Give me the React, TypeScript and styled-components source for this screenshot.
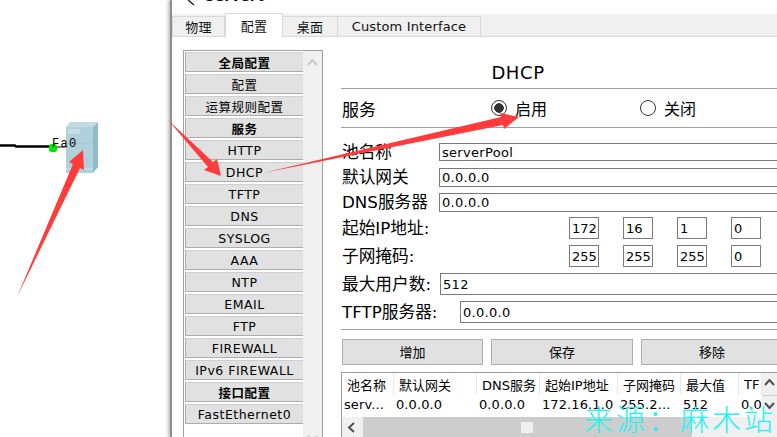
import React from 'react';
import styled, { createGlobalStyle } from 'styled-components';

const GlobalStyle = createGlobalStyle`
  html, body {
    margin: 0;
    padding: 0;
    background: #fff;
    overflow: hidden;
  }
`;

const UI_FONT = `"DejaVu Sans", "Noto Sans CJK SC", sans-serif`;

const Page = styled.div`
  position: relative;
  width: 777px;
  height: 437px;
  display: flex;
  overflow: hidden;
  background: #fff;
  font-family: ${UI_FONT};
  color: #000;
`;

const Canvas = styled.div`
  position: relative;
  flex: 0 0 170px;
`;

const Cable = styled.svg`
  position: absolute;
  left: 0;
  top: 138px;
`;

const PortLabel = styled.span`
  position: absolute;
  left: 52px;
  top: 137px;
  font: 12px/14px "Liberation Mono", monospace;
  letter-spacing: 1.3px;
`;

const ServerIcon = styled.svg`
  position: absolute;
  left: 65px;
  top: 121px;
`;

const Window = styled.div`
  flex: 0 0 auto;
  width: 640px;
  border-left: 2px solid #8e8e8e;
  box-shadow: -2px 0 3px rgba(0, 0, 0, 0.25);
  background: #fff;
  overflow: hidden;
`;

const TitleBar = styled.div`
  height: 14px;
  position: relative;
  overflow: hidden;
`;

const TitleText = styled.span`
  position: absolute;
  left: 33px;
  top: -11px;
  font-size: 13px;
  line-height: 15px;
  font-weight: 700;
  letter-spacing: 0.6px;
`;

const TitleGlyph = styled.svg`
  position: absolute;
  left: 15px;
  top: 0;
`;

const TabStrip = styled.div`
  height: 23px;
  display: flex;
  align-items: flex-end;
  background: #f0f0f0;
  border-bottom: 1px solid #d9d9d9;
  box-sizing: border-box;
`;

const Tab = styled.div<{ $width: number; $active?: boolean }>`
  width: ${p => p.$width}px;
  height: ${p => (p.$active ? 24 : 21)}px;
  margin-bottom: -1px;
  box-sizing: border-box;
  display: flex;
  align-items: center;
  justify-content: center;
  border: 1px solid #d9d9d9;
  border-left-width: ${p => (p.$active ? 1 : 0)}px;
  border-bottom: ${p => (p.$active ? 'none' : '1px solid #d9d9d9')};
  background: ${p => (p.$active ? '#fff' : '#f0f0f0')};
  font-size: 13px;
  letter-spacing: 0.15px;
  color: #111;
  &:first-child {
    border-left-width: 1px;
  }
`;

const Body = styled.div`
  display: flex;
  align-items: flex-start;
  padding: 13px 0 0 11px;
`;

const Sidebar = styled.div`
  flex: 0 0 140px;
  height: 396px;
  box-sizing: border-box;
  display: flex;
  border: 1px solid #a0a0a0;
`;

const NavList = styled.div`
  width: 118px;
  padding: 1px 0 0 1px;
  display: flex;
  flex-direction: column;
  gap: 2px;
`;

const NavItem = styled.div<{ $bold?: boolean }>`
  height: 20px;
  box-sizing: border-box;
  display: flex;
  align-items: center;
  justify-content: center;
  background: #e1e1e1;
  border: 1px solid #adadad;
  border-top-color: #cfcfcf;
  border-right: none;
  font-size: 12.5px;
  letter-spacing: 0.5px;
  font-weight: ${p => (p.$bold ? 700 : 400)};
  white-space: nowrap;
`;

const SideScroll = styled.div`
  flex: 1;
  background: #f0f0f0;
  display: flex;
  flex-direction: column;
  justify-content: space-between;
  align-items: center;
  padding-top: 7px;
`;

const Panel = styled.div`
  flex: 0 0 440px;
  margin-left: 18px;
`;

const PanelTitle = styled.div`
  height: 39px;
  box-sizing: border-box;
  display: flex;
  align-items: center;
  justify-content: center;
  padding: 6px 88px 0 0;
  font-size: 18px;
  letter-spacing: 0.6px;
  border-bottom: 1px solid #a0a0a0;
`;

const ServiceRow = styled.div`
  height: 39px;
  box-sizing: border-box;
  display: grid;
  grid-template-columns: 149px 149px 1fr;
  align-items: center;
  padding-left: 1px;
  font-size: 16px;
  border-bottom: 1px solid #a0a0a0;
`;

const ServiceName = styled.span`
  font-size: 17px;
`;

const RadioLabel = styled.label`
  display: flex;
  align-items: center;
  gap: 8px;
`;

const Radio = styled.span<{ $checked?: boolean }>`
  width: 16px;
  height: 16px;
  box-sizing: border-box;
  border-radius: 50%;
  border: 1px solid #333;
  background: ${p => (p.$checked ? 'radial-gradient(circle, #333 0 4.5px, #fff 5px)' : '#fff')};
`;

const Fields = styled.div`
  padding-top: 11px;
  display: flex;
  flex-direction: column;
`;

const FieldRow = styled.div<{ $height: number; $labelWidth: number }>`
  height: ${p => p.$height}px;
  display: grid;
  grid-template-columns: ${p => p.$labelWidth}px 1fr;
  align-items: center;
  padding-left: 1px;
  font-size: 16.7px;
  white-space: nowrap;
`;

const FieldLabel = styled.span`
  margin-top: -3px;
`;

const TextBox = styled.div<{ $height: number }>`
  height: ${p => p.$height}px;
  box-sizing: border-box;
  display: flex;
  align-items: center;
  padding-left: 2px;
  border: 1px solid #7a7a7a;
  background: #fff;
  font-size: 13px;
  letter-spacing: 0.3px;
`;

const OctetRow = styled.div`
  display: grid;
  grid-template-columns: repeat(4, 30px);
  column-gap: 24px;
`;

const Octet = styled.div`
  height: 22px;
  box-sizing: border-box;
  display: flex;
  align-items: center;
  padding-left: 2px;
  border: 1px solid #7a7a7a;
  font-size: 13px;
`;

const Rule = styled.div`
  height: 1px;
  margin-top: 3px;
  background: #a0a0a0;
`;

const ButtonRow = styled.div`
  margin-top: 9px;
  padding-left: 1px;
  display: grid;
  grid-template-columns: 141px 142px 142px;
  column-gap: 8px;
`;

const ActionButton = styled.div`
  height: 26px;
  box-sizing: border-box;
  display: flex;
  align-items: center;
  justify-content: center;
  padding-bottom: 2px;
  background: #e1e1e1;
  border: 1px solid #adadad;
  font-size: 13px;
`;

const TableBox = styled.div`
  margin-top: 7px;
  width: 436px;
  height: 70px;
  box-sizing: border-box;
  border: 1px solid #9a9a9a;
  border-bottom: none;
  border-right: none;
  display: flex;
  flex-direction: column;
`;

const TableTop = styled.div`
  display: flex;
  height: 44px;
`;

const Columns = styled.div`
  flex: 1;
  display: grid;
  grid-template-columns: 52px 83px 63px 78px 63px 58px 1fr;
  grid-template-rows: 22px 22px;
  overflow: hidden;
`;

const HeadCell = styled.div`
  display: flex;
  align-items: center;
  padding-left: 5px;
  box-sizing: border-box;
  border-right: 1px solid #e8e8e8;
  font-size: 13px;
  white-space: nowrap;
  overflow: hidden;
`;

const DataCell = styled.div`
  display: flex;
  align-items: center;
  padding: 0 0 4px 2px;
  font-size: 13px;
  letter-spacing: 0.1px;
  white-space: nowrap;
  overflow: hidden;
`;

const VScroll = styled.div`
  flex: 0 0 15px;
  display: flex;
  flex-direction: column;
  background: #f0f0f0;
`;

const VButton = styled.div`
  flex: 1;
  display: flex;
  align-items: center;
  justify-content: center;
  &:first-child {
    border-bottom: 1px solid #d0d0d0;
  }
`;

const HScroll = styled.div`
  height: 20px;
  display: flex;
  background: #f0f0f0;
`;

const HLeft = styled.div`
  flex: 0 0 21px;
  display: flex;
  align-items: center;
  justify-content: center;
`;

const HTrack = styled.div`
  flex: 0 0 329px;
  background: #cdcdcd;
  display: flex;
  align-items: center;
  padding-left: 158px;
  box-sizing: border-box;
`;

const HThumb = styled.div`
  width: 12px;
  height: 11px;
  background: #f0f0f0;
`;

const Watermark = styled.div`
  position: absolute;
  left: 584px;
  top: 400px;
  color: #19f5f5;
  font: 200 29px/36px "Noto Sans CJK SC", sans-serif;
  letter-spacing: 3px;
  white-space: pre;
`;

const Arrows = styled.svg`
  position: absolute;
  left: 0;
  top: 0;
  pointer-events: none;
`;

const NAV: { label: string; bold?: boolean }[] = [
  { label: '全局配置', bold: true },
  { label: '配置' },
  { label: '运算规则配置' },
  { label: '服务', bold: true },
  { label: 'HTTP' },
  { label: 'DHCP' },
  { label: 'TFTP' },
  { label: 'DNS' },
  { label: 'SYSLOG' },
  { label: 'AAA' },
  { label: 'NTP' },
  { label: 'EMAIL' },
  { label: 'FTP' },
  { label: 'FIREWALL' },
  { label: 'IPv6 FIREWALL' },
  { label: '接口配置', bold: true },
  { label: 'FastEthernet0' },
];

const HEADS = ['池名称', '默认网关', 'DNS服务', '起始IP地址', '子网掩码', '最大值', 'TF'];
const CELLS = ['serv...', '0.0.0.0', '0.0.0.0', '172.16.1.0', '255.2...', '512', '0.0'];

const Chevron: React.FC<{ dir: 'up' | 'down' | 'left'; color?: string }> = ({ dir, color = '#505050' }) => {
  const points = dir === 'up' ? '1,7 5.5,2 10,7' : dir === 'down' ? '1,2 5.5,7 10,2' : '7,1 2,5.5 7,10';
  return (
    <svg width="11" height="11" viewBox="0 0 11 11">
      <polyline points={points} fill="none" stroke={color} strokeWidth="2" />
    </svg>
  );
};

const App: React.FC = () => (
  <Page>
    <GlobalStyle />
    <Canvas>
      <Cable width="68" height="15" viewBox="0 0 68 15">
        <polyline points="0,7.5 15,7.5 16,8.5 50,8.5" fill="none" stroke="#000" strokeWidth="2.4" />
        <line x1="56" y1="9" x2="66" y2="9" stroke="#000" strokeWidth="1" />
        <rect x="49" y="6" width="8" height="8" rx="2.5" fill="#00e600" />
      </Cable>
      <ServerIcon width="34" height="54" viewBox="0 0 34 54">
        <polygon points="1,6 5,1 33,1 28,6" fill="#c2dbe3" />
        <polygon points="28,6 33,1 33,46 28,52" fill="#8fbccb" />
        <polygon points="1,6 28,6 28,52 1,52" fill="#b0d0dc" />
        <rect x="3" y="8" width="12" height="5" fill="#c6dde5" />
        <rect x="1" y="22" width="27" height="1" fill="#a6c8d4" />
        <rect x="1" y="47" width="27" height="2" fill="#c3dde6" />
      </ServerIcon>
      <PortLabel>Fa0</PortLabel>
    </Canvas>
    <Window>
      <TitleBar>
        <TitleGlyph width="16" height="6" viewBox="0 0 16 6">
          <line x1="1" y1="0" x2="7" y2="5" stroke="#222" strokeWidth="1.5" />
        </TitleGlyph>
        <TitleText>Server0</TitleText>
      </TitleBar>
      <TabStrip>
        <Tab $width={53}>物理</Tab>
        <Tab $width={58} $active>配置</Tab>
        <Tab $width={55}>桌面</Tab>
        <Tab $width={143}>Custom Interface</Tab>
      </TabStrip>
      <Body>
        <Sidebar>
          <NavList>
            {NAV.map(item => (
              <NavItem key={item.label} $bold={item.bold}>{item.label}</NavItem>
            ))}
          </NavList>
          <SideScroll>
            <Chevron dir="up" color="#c8c8c8" />
            <Chevron dir="down" color="#c8c8c8" />
          </SideScroll>
        </Sidebar>
        <Panel>
          <PanelTitle>DHCP</PanelTitle>
          <ServiceRow>
            <ServiceName>服务</ServiceName>
            <RadioLabel><Radio $checked />启用</RadioLabel>
            <RadioLabel><Radio />关闭</RadioLabel>
          </ServiceRow>
          <Fields>
            <FieldRow $height={26} $labelWidth={97}>
              <FieldLabel>池名称</FieldLabel>
              <TextBox $height={18}>serverPool</TextBox>
            </FieldRow>
            <FieldRow $height={25} $labelWidth={97}>
              <FieldLabel>默认网关</FieldLabel>
              <TextBox $height={19}>0.0.0.0</TextBox>
            </FieldRow>
            <FieldRow $height={24} $labelWidth={97}>
              <FieldLabel>DNS服务器</FieldLabel>
              <TextBox $height={19}>0.0.0.0</TextBox>
            </FieldRow>
            <FieldRow $height={28} $labelWidth={227}>
              <FieldLabel>起始IP地址:</FieldLabel>
              <OctetRow>
                <Octet>172</Octet><Octet>16</Octet><Octet>1</Octet><Octet>0</Octet>
              </OctetRow>
            </FieldRow>
            <FieldRow $height={28} $labelWidth={227}>
              <FieldLabel>子网掩码:</FieldLabel>
              <OctetRow>
                <Octet>255</Octet><Octet>255</Octet><Octet>255</Octet><Octet>0</Octet>
              </OctetRow>
            </FieldRow>
            <FieldRow $height={28} $labelWidth={98}>
              <FieldLabel>最大用户数:</FieldLabel>
              <TextBox $height={22}>512</TextBox>
            </FieldRow>
            <FieldRow $height={28} $labelWidth={118}>
              <FieldLabel>TFTP服务器:</FieldLabel>
              <TextBox $height={22}>0.0.0.0</TextBox>
            </FieldRow>
          </Fields>
          <Rule />
          <ButtonRow>
            <ActionButton>增加</ActionButton>
            <ActionButton>保存</ActionButton>
            <ActionButton>移除</ActionButton>
          </ButtonRow>
          <TableBox>
            <TableTop>
              <Columns>
                {HEADS.map(h => <HeadCell key={h}>{h}</HeadCell>)}
                {CELLS.map((c, i) => <DataCell key={i}>{c}</DataCell>)}
              </Columns>
              <VScroll>
                <VButton><Chevron dir="up" /></VButton>
                <VButton><Chevron dir="down" /></VButton>
              </VScroll>
            </TableTop>
            <HScroll>
              <HLeft><Chevron dir="left" /></HLeft>
              <HTrack><HThumb /></HTrack>
            </HScroll>
          </TableBox>
        </Panel>
      </Body>
    </Window>
    <Arrows width="777" height="437" viewBox="0 0 777 437">
      <polygon points="17,297 73,164 69,162 83,150 84,170 80,168" fill="#ff3b3b" />
      <polygon points="168,120 213,162 217,159 221,176 204,170 208,167" fill="#ff3b3b" />
      <polygon points="263,173 501,117 500,113 519,117 504,129 503,125" fill="#ff3b3b" />
    </Arrows>
    <Watermark>来源：麻木站</Watermark>
  </Page>
);

export default App;
